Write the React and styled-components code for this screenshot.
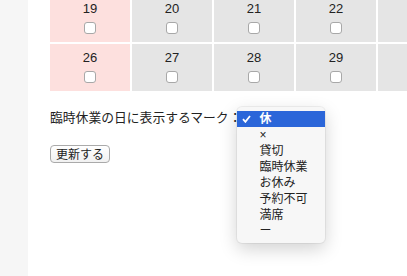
import React from "react";
import styled, { createGlobalStyle } from "styled-components";

const GlobalStyle = createGlobalStyle`
  html, body {
    margin: 0;
    padding: 0;
    background: #ffffff;
  }
  body {
    font-family: "Liberation Sans", "Noto Sans CJK JP", sans-serif;
    color: #222;
  }
`;

const Page = styled.div`
  display: flex;
  width: 407px;
  height: 276px;
  overflow: hidden;
`;

const Sidebar = styled.div`
  flex: 0 0 28px;
  background: #f6f6f6;
`;

const Main = styled.div`
  flex: 1;
  padding-left: 22px;
  overflow: hidden;
`;

const Calendar = styled.div`
  display: grid;
  grid-template-columns: repeat(7, 80px);
  gap: 2px;
  margin-top: -5px;
  width: max-content;
`;

const Cell = styled.div`
  height: 47px;
  background: ${(p) => (p.$holiday ? "#fde0de" : "#e5e5e5")};
  display: flex;
  flex-direction: column;
  align-items: center;
  padding-top: 6px;
  box-sizing: border-box;
`;

const DayNumber = styled.span`
  font-size: 13px;
  line-height: 16px;
  color: #222;
`;

const Check = styled.input.attrs({ type: "checkbox" })`
  appearance: none;
  width: 12px;
  height: 12px;
  margin: 5px 0 0;
  border: 1px solid #a8a8a8;
  border-radius: 3px;
  background: #fff;
  box-sizing: border-box;
`;

const MarkRow = styled.div`
  display: flex;
  align-items: center;
  margin-top: 17px;
  height: 18px;
`;

const Label = styled.span`
  font-family: "Noto Sans CJK JP", sans-serif;
  font-size: 12.8px;
  line-height: 18px;
  color: #222;
  white-space: nowrap;
`;

const SelectWrap = styled.div`
  position: relative;
  width: 88px;
  height: 18px;
  margin-left: -4px;
`;

const Menu = styled.ul`
  position: absolute;
  left: 0;
  top: -1px;
  width: 88px;
  margin: 0;
  padding: 4px 0;
  list-style: none;
  background: #f7f7f7;
  border-radius: 5px;
  box-shadow: 0 0 0 1px rgba(0, 0, 0, 0.05), 0 6px 18px rgba(0, 0, 0, 0.18);
  z-index: 2;
`;

const Option = styled.li`
  display: flex;
  align-items: center;
  height: 16px;
  padding-left: 22px;
  position: relative;
  font-family: "Liberation Sans", "Noto Sans CJK JP", sans-serif;
  font-size: 12px;
  line-height: 16px;
  color: ${(p) => (p.$selected ? "#fff" : "#222")};
  background: ${(p) => (p.$selected ? "#2b66d9" : "transparent")};
  font-weight: ${(p) => (p.$selected ? 700 : 400)};
`;

const Tick = styled.svg`
  position: absolute;
  left: 5px;
  top: 4px;
`;

const SubmitButton = styled.button`
  display: block;
  margin-top: 19px;
  height: 18px;
  padding: 0 5px;
  font-family: "Noto Sans CJK JP", sans-serif;
  font-size: 12px;
  line-height: 16px;
  color: #222;
  background: linear-gradient(#ffffff, #f1f1f1);
  border: 1px solid #aaaaaa;
  border-radius: 4px;
`;

const weeks = [
  [19, 20, 21, 22, 23, 24, 25],
  [26, 27, 28, 29, 30, 31, ""],
];

const marks = ["休", "×", "貸切", "臨時休業", "お休み", "予約不可", "満席", "ー"];

function App() {
  return (
    <Page>
      <GlobalStyle />
      <Sidebar />
      <Main>
        <Calendar>
          {weeks.flat().map((day, i) => (
            <Cell key={i} $holiday={i % 7 === 0}>
              <DayNumber>{day}</DayNumber>
              {day !== "" && <Check />}
            </Cell>
          ))}
        </Calendar>
        <MarkRow>
          <Label>臨時休業の日に表示するマーク：</Label>
          <SelectWrap>
            <Menu>
              {marks.map((m, i) => (
                <Option key={m} $selected={i === 0}>
                  {i === 0 && (
                    <Tick width="9" height="8" viewBox="0 0 9 8">
                      <polyline
                        points="1,4.2 3.4,6.8 8,1"
                        fill="none"
                        stroke="#fff"
                        strokeWidth="1.8"
                      />
                    </Tick>
                  )}
                  {m}
                </Option>
              ))}
            </Menu>
          </SelectWrap>
        </MarkRow>
        <SubmitButton>更新する</SubmitButton>
      </Main>
    </Page>
  );
}

export default App;
